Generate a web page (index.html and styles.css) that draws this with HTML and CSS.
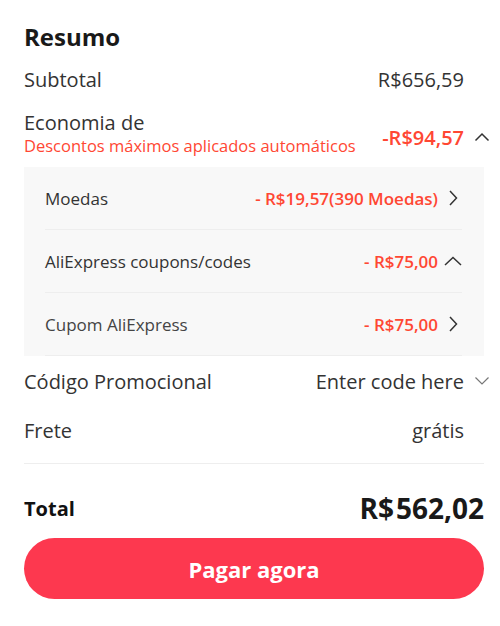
FILE: index.html
```html
<!DOCTYPE html>
<html lang="pt">
<head>
    <meta charset="UTF-8">
    <title>Resumo</title>
    <link rel="stylesheet" href="styles.css">
</head>
<body>
<div class="summary">
    <h2 class="title">Resumo</h2>

    <div class="row row-sub">
        <span class="label">Subtotal</span>
        <span class="value">R$656,59</span>
    </div>

    <div class="row row-eco">
        <div class="label">
            Economia de
            <div class="hint">Descontos máximos aplicados automáticos</div>
        </div>
        <span class="value red bold">-R$94,57</span>
        <span class="chev">
            <svg width="16" height="10" viewBox="0 0 16 10"><path d="M1.5 8.5L8 2l6.5 6.5" fill="none" stroke="#333" stroke-width="1.5"/></svg>
        </span>
    </div>

    <div class="panel">
        <div class="item">
            <span class="item-label">Moedas</span>
            <span class="item-value">- R$19,57(390 Moedas)</span>
            <span class="item-chev">
                <svg width="10" height="16" viewBox="0 0 10 16"><path d="M2 1l6.5 7L2 15" fill="none" stroke="#333" stroke-width="1.5"/></svg>
            </span>
        </div>
        <div class="item">
            <span class="item-label">AliExpress coupons/codes</span>
            <span class="item-value">- R$75,00</span>
            <span class="item-chev">
                <svg width="18" height="10" viewBox="0 0 18 10"><path d="M1 9l8-7.5 8 7.5" fill="none" stroke="#333" stroke-width="1.5"/></svg>
            </span>
        </div>
        <div class="item">
            <span class="item-label light">Cupom AliExpress</span>
            <span class="item-value">- R$75,00</span>
            <span class="item-chev">
                <svg width="10" height="16" viewBox="0 0 10 16"><path d="M2 1l6.5 7L2 15" fill="none" stroke="#333" stroke-width="1.5"/></svg>
            </span>
        </div>
    </div>

    <div class="row row-code">
        <span class="label">Código Promocional</span>
        <span class="value">Enter code here</span>
        <span class="chev">
            <svg width="16" height="10" viewBox="0 0 16 10"><path d="M1.5 1.5L8 8l6.5-6.5" fill="none" stroke="#777" stroke-width="1.2"/></svg>
        </span>
    </div>

    <div class="row row-ship">
        <span class="label">Frete</span>
        <span class="value">grátis</span>
    </div>

    <div class="line"></div>

    <div class="total">
        <span class="total-label">Total</span>
        <span class="total-value">R$<span class="num">562,02</span></span>
    </div>

    <button class="pay">Pagar agora</button>
</div>
</body>
</html>
```

FILE: styles.css
```css
body
{
    margin: 0;
    background: #fff;
    font-family: "Open Sans", "Liberation Sans", sans-serif;
    color: #222;
}
.summary
{
    padding: 20px 16px 0 24px;
}
.title
{
    margin: 0;
    font-size: 24px;
    line-height: 34px;
    font-weight: 700;
    color: #191919;
}
.row
{
    display: flex;
    align-items: center;
    font-size: 20px;
    color: #333;
}
.row .label
{
    flex: 1;
}
.value
{
    margin-right: 20px;
}
.row .value:not(:last-child)
{
    margin-right: 0;
}
.chev
{
    display: flex;
    justify-content: center;
    width: 18px;
    margin-left: 9px;
    margin-right: -7px;
}
.row-sub
{
    height: 50px;
}
.row-eco
{
    height: 63px;
    line-height: 24px;
    padding-bottom: 4px;
    box-sizing: border-box;
}
.hint
{
    font-size: 16.5px;
    line-height: 22px;
    color: #ff4733;
}
.red
{
    color: #ff4733;
}
.bold
{
    font-weight: 600;
}
.row-eco .value
{
    margin-top: 8px;
}
.row-eco .chev
{
    margin-top: 6px;
}
.panel
{
    background: #f8f8f8;
}
.item
{
    display: flex;
    align-items: center;
    height: 62px;
    margin-left: 21px;
    margin-right: 22px;
    border-bottom: 1px solid #eeeeee;
    font-size: 17px;
}
.item-label
{
    flex: 1;
    color: #333;
}
.item-label.light
{
    color: #444;
}
.item-value
{
    color: #ff4733;
    font-weight: 600;
}
.item-chev
{
    display: flex;
    justify-content: center;
    width: 18px;
    margin-left: 6px;
}
.row-code
{
    height: 50px;
}
.row-ship
{
    height: 48px;
}
.line
{
    height: 1px;
    margin-top: 9px;
    background: #eeeeee;
}
.total
{
    display: flex;
    align-items: center;
    justify-content: space-between;
    height: 60px;
    margin-top: 14px;
}
.total-label
{
    font-size: 20px;
    font-weight: 700;
    color: #111;
}
.total-value
{
    font-size: 28px;
    font-weight: 700;
    color: #191919;
}
.num
{
    margin-left: 2px;
}
.pay
{
    display: block;
    width: 100%;
    height: 61px;
    border: none;
    border-radius: 31px;
    background: #fd384f;
    color: #fff;
    font-family: "Open Sans", "Liberation Sans", sans-serif;
    font-size: 22px;
    font-weight: 700;
    cursor: pointer;
}
```
